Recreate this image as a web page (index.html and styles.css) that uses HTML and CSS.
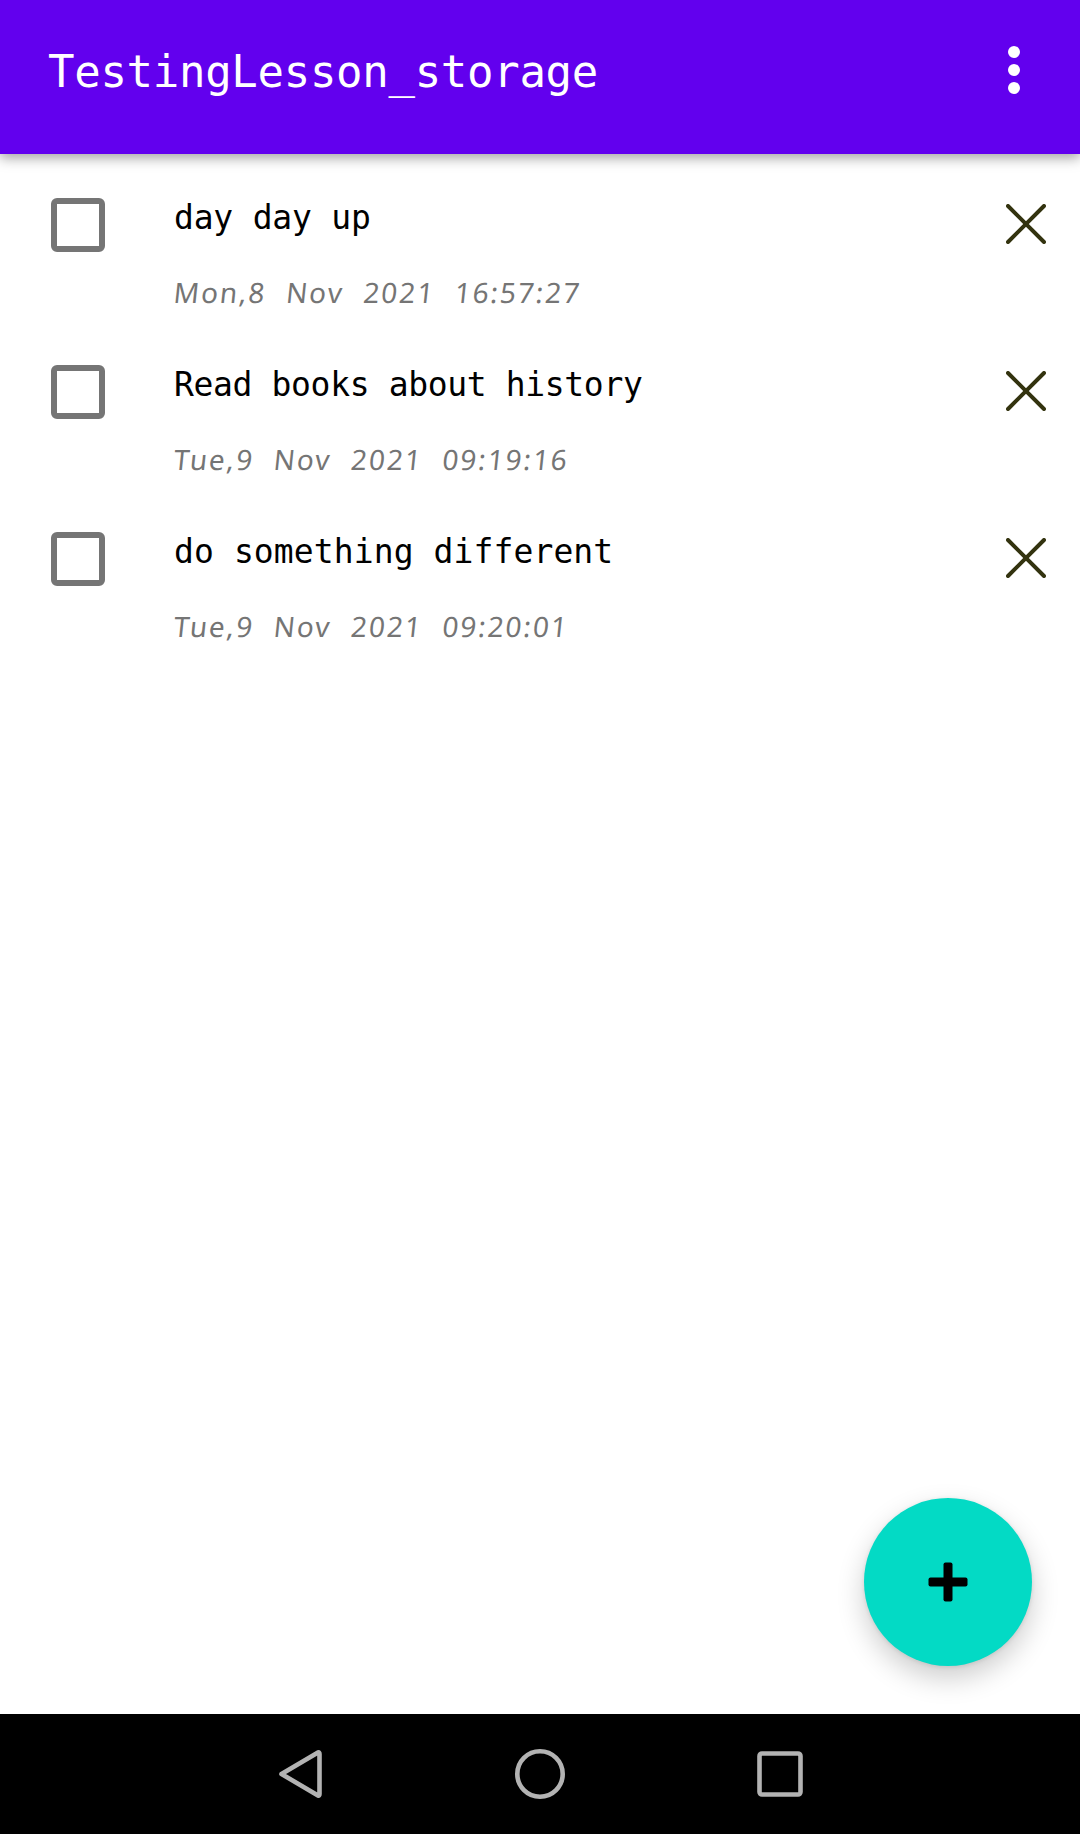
FILE: index.html
```html
<!DOCTYPE html>
<html lang="en">
<head>
<meta charset="utf-8">
<title>TestingLesson_storage</title>
<link rel="stylesheet" href="styles.css">
</head>
<body>
<div class="app">
  <header class="bar">
    <h1 class="bar-title">TestingLesson_storage</h1>
    <svg class="more" width="12" height="48" viewBox="0 0 12 48" fill="#fff"><circle cx="6" cy="6" r="6"/><circle cx="6" cy="24" r="6"/><circle cx="6" cy="42" r="6"/></svg>
  </header>
  <main class="list">
    <article class="note">
      <span class="check"></span>
      <div class="note-body"><p class="text">day day up</p><p class="date">Mon,8 Nov 2021 16:57:27</p></div>
      <svg class="close" width="40" height="40" viewBox="0 0 40 40"><path d="M2 2 38 38M38 2 2 38"/></svg>
    </article>
    <article class="note">
      <span class="check"></span>
      <div class="note-body"><p class="text text-snug">Read books about history</p><p class="date">Tue,9 Nov 2021 09:19:16</p></div>
      <svg class="close" width="40" height="40" viewBox="0 0 40 40"><path d="M2 2 38 38M38 2 2 38"/></svg>
    </article>
    <article class="note">
      <span class="check"></span>
      <div class="note-body"><p class="text text-loose">do something different</p><p class="date">Tue,9 Nov 2021 09:20:01</p></div>
      <svg class="close" width="40" height="40" viewBox="0 0 40 40"><path d="M2 2 38 38M38 2 2 38"/></svg>
    </article>
    <div class="fab"><svg width="40" height="40" viewBox="0 0 40 40"><rect x="15.5" y="0.5" width="9" height="39" rx="2"/><rect x="0.5" y="15.5" width="39" height="9" rx="2"/></svg></div>
  </main>
  <nav class="nav">
    <svg width="50" height="52" viewBox="0 0 50 52"><path d="M5.500 26 42 4.500Q43.500 4 43.500 6V46Q43.500 48 42 47.500Z"/></svg>
    <svg width="52" height="52" viewBox="0 0 52 52"><circle cx="26" cy="26" r="22.700"/></svg>
    <svg width="52" height="52" viewBox="0 0 52 52"><rect x="5.500" y="5.500" width="41" height="41" rx="2.500"/></svg>
  </nav>
</div>
</body>
</html>
```
FILE: styles.css
```css
* { box-sizing: border-box; margin: 0; padding: 0; }
body { background: #fff; }
svg { display: block; }
.app { width: 1080px; height: 1834px; display: flex; flex-direction: column; overflow: hidden; }
.bar {
  height: 154px; flex: none; display: flex; justify-content: space-between;
  padding: 46px 60px 0 48px; background: #6200ee; color: #fff;
  box-shadow: 0 4px 12px rgba(0, 0, 0, .36); z-index: 1;
}
.bar-title { font: 400 44px/52px "DejaVu Sans Mono", monospace; letter-spacing: -.3px; }
.list { position: relative; flex: 1; background: #fff; }
.note { height: 167px; display: flex; align-items: flex-start; padding: 44px 34px 0 51px; }
.check { width: 54px; height: 54px; border: 6px solid #757575; border-radius: 6px; }
.note-body { flex: 1; padding-left: 69px; margin-top: -4px; }
.text { font: 400 33px/48px "DejaVu Sans Mono", monospace; letter-spacing: -.2px; color: #000; }
.text-snug { letter-spacing: -.35px; }
.text-loose { letter-spacing: .1px; }
.date {
  font: 400 28px/40px "Noto Sans", sans-serif; letter-spacing: 1.9px; word-spacing: 10.5px;
  color: #757575; margin-top: 30px; transform: skewX(-6deg);
}
.close { margin-top: 6px; fill: none; stroke: #33330f; stroke-width: 4; stroke-linecap: round; }
.fab {
  position: absolute; right: 48px; bottom: 48px; width: 168px; height: 168px; border-radius: 50%;
  display: flex; align-items: center; justify-content: center; background: #03dac5;
  box-shadow: 0 12px 28px rgba(0, 0, 0, .2), 0 1px 4px rgba(0, 0, 0, .1);
}
.nav {
  height: 120px; flex: none; display: flex; align-items: center; justify-content: space-between;
  padding: 0 274px 0 276px; background: #000; fill: none; stroke: #b3b3b3; stroke-width: 4.6; stroke-linejoin: round;
}
```
